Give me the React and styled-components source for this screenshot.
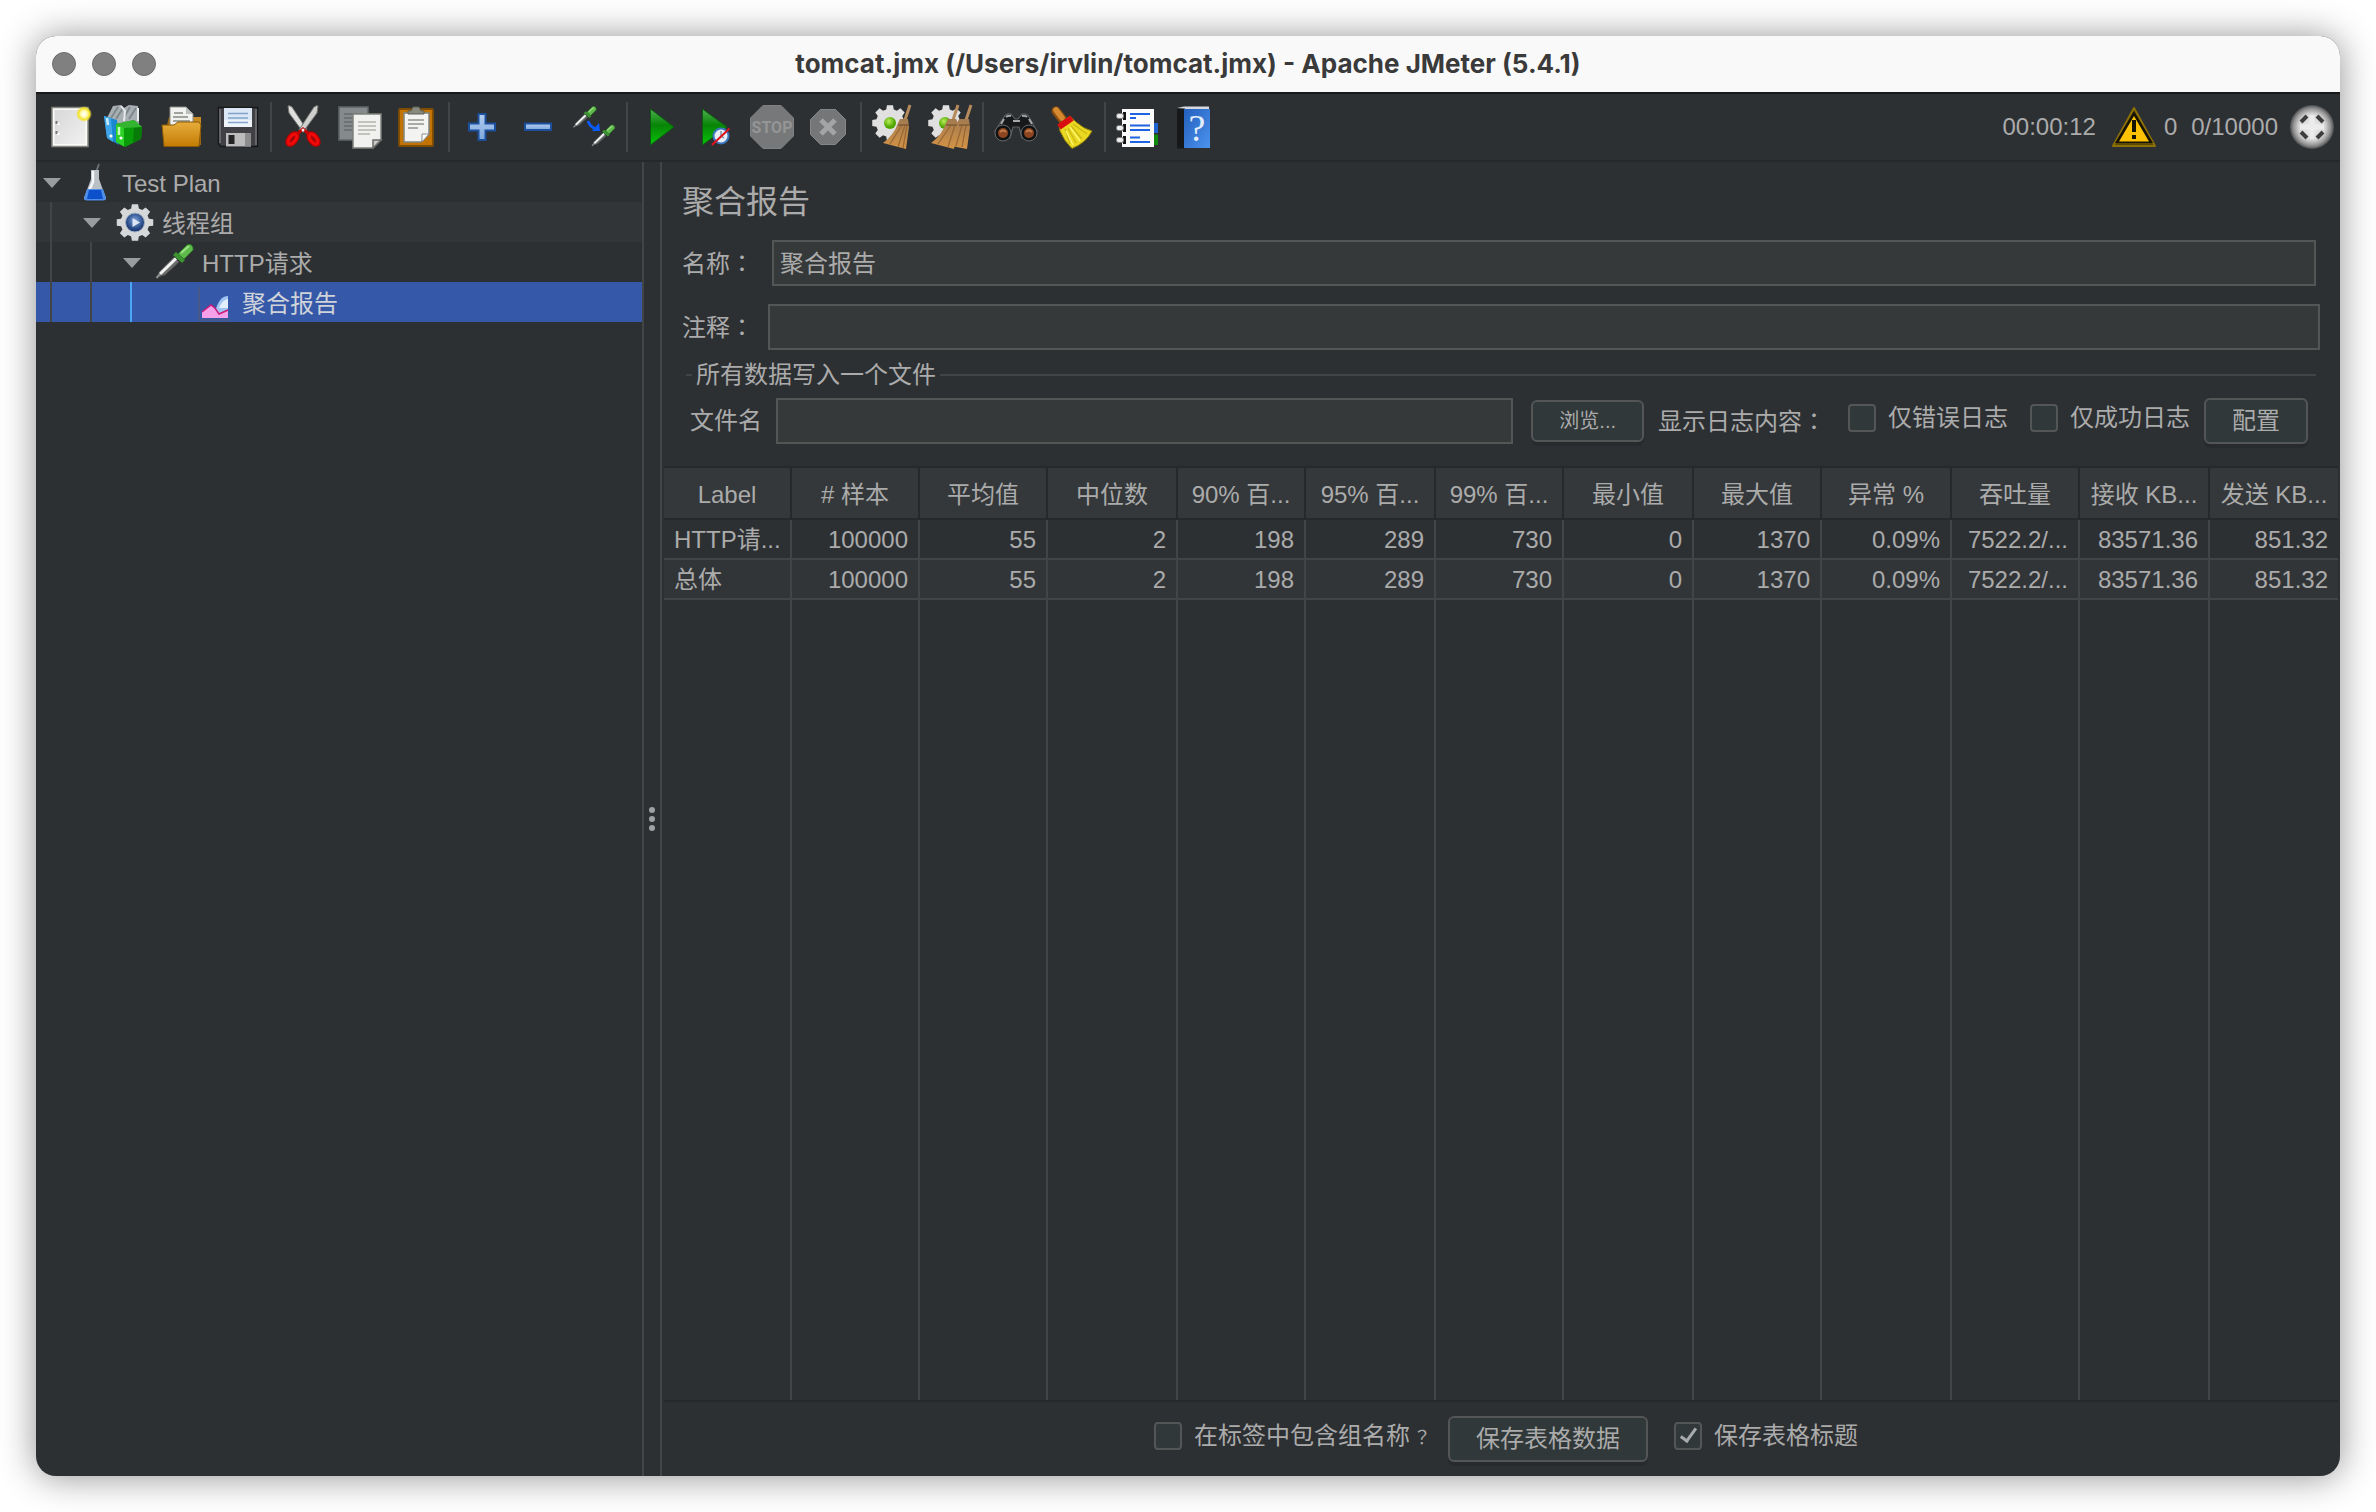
import React, { useState } from "react";
import styled, { createGlobalStyle, css } from "styled-components";

const c = {
  bg: "#2d3033",
  alt: "#323538",
  dark: "#26292b",
  line: "#434445",
  text: "#ababab",
  field: "#363939",
  border: "#545555",
  control: "#303839",
  select: "#3558a8",
};

const Global = createGlobalStyle`
  *, *::before, *::after { box-sizing: border-box; }
  body {
    margin: 0;
    background: #fff;
    color: ${c.text};
    font-family: "Liberation Sans", "Noto Sans CJK SC", sans-serif;
    font-size: 24px;
    line-height: 30px;
  }
  button, input { font: inherit; color: inherit; margin: 0; }
`;

const Desktop = styled.div`
  min-height: 100vh;
  padding: 36px;
  display: flex;
`;

const Window = styled.div`
  flex: 1;
  min-width: 0;
  display: flex;
  flex-direction: column;
  overflow: hidden;
  border-radius: 20px;
  background: ${c.bg};
  box-shadow: 0 1px 36px rgba(0, 0, 0, 0.44);
`;

const TitleBar = styled.header`
  display: grid;
  grid-template-columns: 1fr auto 1fr;
  align-items: center;
  height: 58px;
  padding: 0 16px;
  background: #f9f9f9;
  border-bottom: 2px solid #17191a;
`;

const Lights = styled.div`
  display: flex;
  gap: 16px;
`;

const Light = styled.button`
  width: 24px;
  height: 24px;
  padding: 0;
  border: 1px solid #6c6c6c;
  border-radius: 50%;
  background: #808080;
`;

const Title = styled.h1`
  margin: 0;
  color: #3a3a3a;
  font: 700 26px/30px Inter, "Liberation Sans", sans-serif;
`;

const ToolBar = styled.div`
  display: flex;
  align-items: center;
  height: 68px;
  padding: 0 6px;
  border-bottom: 2px solid ${c.dark};
`;

const ToolButton = styled.button`
  width: 56px;
  height: 56px;
  padding: 6px;
  border: 0;
  background: none;
`;

const Icon = styled.svg`
  display: block;
  flex: none;
  width: ${(p) => p.$size ?? 44}px;
  height: ${(p) => p.$size ?? 44}px;
  overflow: visible;
`;

const Separator = styled.div`
  width: 2px;
  height: 50px;
  margin: 0 4px;
  background: ${c.line};
`;

const Status = styled.div`
  display: flex;
  align-items: center;
  margin-left: auto;
`;

const StatusText = styled.span`
  margin-left: ${(p) => p.$gap || 0}px;
  margin-right: ${(p) => p.$after || 0}px;
`;

const Body = styled.div`
  flex: 1;
  display: flex;
  min-height: 0;
`;

const Tree = styled.nav`
  flex: none;
  width: 606px;
`;

const TreeRow = styled.div`
  display: flex;
  align-items: center;
  height: 40px;
  background: ${(p) => (p.$selected ? c.select : p.$alt ? c.alt : c.bg)};
  color: ${(p) => (p.$selected ? "#cfd3da" : c.text)};
`;

const Guide = styled.span`
  align-self: stretch;
  width: 40px;
  padding-left: 14px;
  &::before {
    content: "";
    display: block;
    width: 2px;
    height: 100%;
    background: ${(p) => (p.$active ? "#4ba6f5" : c.line)};
  }
`;

const Toggle = styled.button`
  display: flex;
  width: 38px;
  height: 40px;
  padding: 2px 0 0 7px;
  align-items: center;
  border: 0;
  background: none;
`;

const Spacer = styled.span`
  width: 38px;
`;

const Arrow = styled.span`
  border: 9px solid transparent;
  border-top: 10px solid #9a9d9f;
  border-bottom: 0;
`;

const NodeName = styled.span`
  margin-left: 8px;
  padding-top: 3px;
`;

const Divider = styled.div`
  flex: none;
  width: 20px;
  display: flex;
  flex-direction: column;
  align-items: center;
  justify-content: center;
  gap: 3px;
  border: solid ${c.line};
  border-width: 0 2px;
`;

const Dot = styled.span`
  width: 6px;
  height: 6px;
  border-radius: 50%;
  background: #9ea2a4;
`;

const Main = styled.main`
  flex: 1;
  min-width: 0;
  display: flex;
  flex-direction: column;
  padding: 0 2px;
`;

const Heading = styled.h2`
  margin: 20px 0 18px 18px;
  font-size: 32px;
  line-height: 40px;
  font-weight: 400;
`;

const Field = styled.div`
  display: flex;
  align-items: center;
  gap: ${(p) => (p.$wide ? 14 : 18)}px;
  margin: 0 ${(p) => (p.$wide ? 18 : 22)}px ${(p) => (p.$wide ? 10 : 18)}px 18px;
`;

/* Full-width colon and question mark sit in the middle of their square. */
const Mark = styled.span`
  display: inline-block;
  width: 24px;
  text-align: center;
  font-family: "Noto Sans CJK TC", sans-serif;
  font-size: ${(p) => (p.$small ? 18 : 24)}px;
`;

const TextBox = styled.input`
  flex: 1;
  min-width: 0;
  height: 46px;
  padding: 0 6px 4px;
  border: 2px solid ${c.border};
  border-radius: 0;
  outline: 0;
  background: ${c.field};
`;

const Group = styled.fieldset`
  min-width: 0;
  margin: 0 22px 22px;
  padding: 8px 8px 0 4px;
  border: 0;
  border-top: 2px solid ${c.line};
`;

const Legend = styled.legend`
  margin-left: 2px;
  padding: 0 4px;
`;

const FileRow = styled.div`
  display: flex;
  align-items: center;
  white-space: nowrap;
`;

const FileLabel = styled.label`
  margin-right: 14px;
`;

const Caption = styled.span`
  margin: 0 22px 0 14px;
`;

const Button = styled.button`
  height: ${(p) => (p.$small ? 42 : 46)}px;
  padding: 0 26px;
  border: 2px solid ${c.border};
  border-radius: 6px;
  background: ${c.control};
  box-shadow: 0 4px 0 #282b2d;
  white-space: nowrap;
  font-size: ${(p) => (p.$small ? 20 : 24)}px;
  margin-left: ${(p) => p.$gap || 0}px;
`;

const Check = styled.label`
  display: flex;
  align-items: center;
  gap: 12px;
  margin-bottom: 6px;
  margin-right: ${(p) => p.$after || 0}px;
`;

const Box = styled.input`
  appearance: none;
  display: grid;
  width: 28px;
  height: 28px;
  border: 2px solid ${c.border};
  border-radius: 4px;
  background: ${c.control};
  ${(p) =>
    p.checked &&
    css`
      &::before {
        content: "";
        width: 9px;
        height: 17px;
        margin: 1px 0 0 8px;
        border: solid #a8abac;
        border-width: 0 3px 3px 0;
        transform: rotate(36deg);
      }
    `}
`;

const TableArea = styled.div`
  flex: 1;
  display: flex;
  border: solid ${c.dark};
  border-width: 2px 0;
`;

const Table = styled.table`
  width: 100%;
  table-layout: fixed;
  border-collapse: separate;
  border-spacing: 0;
`;

const Head = styled.th`
  height: 52px;
  padding: 4px 0 0;
  overflow: hidden;
  white-space: nowrap;
  font-weight: 400;
  background: #34383a;
  border: solid ${c.dark};
  border-width: 0 2px 2px 0;
  &:last-child { border-right-width: 0; }
`;

const Row = styled.tr`
  background: ${(p) => (p.$alt ? c.alt : c.bg)};
`;

const Cell = styled.td`
  height: ${(p) => (p.$filler ? "auto" : "40px")};
  padding: 2px 10px 0;
  overflow: hidden;
  white-space: nowrap;
  text-align: right;
  border: solid ${c.line};
  border-width: 0 2px ${(p) => (p.$filler ? 0 : 2)}px 0;
  &:first-child { text-align: left; }
  &:last-child { border-right-width: 0; }
`;

const Footer = styled.footer`
  display: flex;
  align-items: center;
  justify-content: center;
  height: 74px;
  padding-left: 10px;
`;

const SaveButton = styled(Button)`
  margin-right: 26px;
`;

const gearPath = (cx, cy, r) => {
  const pts = [];
  for (let i = 0; i < 8; i++) {
    const a = (i * Math.PI) / 4;
    [[-0.27, 0.78], [-0.17, 1], [0.17, 1], [0.27, 0.78]].forEach(([d, k]) => {
      pts.push(`${cx + Math.sin(a + d) * r * k},${cy - Math.cos(a + d) * r * k}`);
    });
  }
  return pts.join(" ");
};

const Gradients = () => (
  <Icon $size={0} aria-hidden="true">
    <defs>
      <linearGradient id="paper" x1="0" y1="0" x2="1" y2="1">
        <stop offset="0" stopColor="#d8d8d8" /><stop offset="1" stopColor="#f0f0f0" />
      </linearGradient>
      <linearGradient id="folder" x1="0" y1="0" x2="0" y2="1">
        <stop offset="0" stopColor="#e8ad3c" /><stop offset="1" stopColor="#c27c04" />
      </linearGradient>
      <linearGradient id="green" x1="0" y1="0" x2="0" y2="1">
        <stop offset="0" stopColor="#4fb04f" /><stop offset="0.45" stopColor="#078407" /><stop offset="1" stopColor="#09c409" />
      </linearGradient>
      <linearGradient id="sky" x1="0" y1="0" x2="0" y2="1">
        <stop offset="0" stopColor="#b4cdf0" /><stop offset="1" stopColor="#7da7de" />
      </linearGradient>
      <linearGradient id="straw" x1="0" y1="0" x2="0" y2="1">
        <stop offset="0" stopColor="#a37b50" /><stop offset="1" stopColor="#d49345" />
      </linearGradient>
      <linearGradient id="book" x1="0" y1="0" x2="1" y2="1">
        <stop offset="0" stopColor="#2460bd" /><stop offset="1" stopColor="#4b93ee" />
      </linearGradient>
      <radialGradient id="ball">
        <stop offset="0" stopColor="#ededed" /><stop offset="0.6" stopColor="#d6d6d6" /><stop offset="0.85" stopColor="#8f8f8f" /><stop offset="1" stopColor="#4a4c4e" />
      </radialGradient>
      <radialGradient id="glow">
        <stop offset="0" stopColor="#fff" /><stop offset="0.35" stopColor="#fffbc0" /><stop offset="0.7" stopColor="#f3e22a" /><stop offset="1" stopColor="#f3e22a" stopOpacity="0" />
      </radialGradient>
      <radialGradient id="lime" cx="0.4" cy="0.35">
        <stop offset="0" stopColor="#b8ee5a" /><stop offset="1" stopColor="#4fa500" />
      </radialGradient>
      <radialGradient id="lens" cx="0.5" cy="0.4">
        <stop offset="0" stopColor="#7ba3dc" /><stop offset="1" stopColor="#1d3c78" />
      </radialGradient>
    </defs>
  </Icon>
);

const Pipette = ({ x, y, k = 1 }) => (
  <g transform={`translate(${x} ${y}) scale(${k})`}>
    <path d="M3 35 L6 29 L20 15 L25 20 L11 33 Z" fill="#6c6e6e" stroke="#4d4f4f" strokeWidth="1" />
    <path d="M6 32 L22 16.500" stroke="#f2f2f2" strokeWidth="3" />
    <path d="M2.500 36 L6 32" stroke="#8c8c8c" strokeWidth="2" />
    <path d="M22 10 L31 18 L28 21 L19 13 Z" fill="#3a9430" />
    <path d="M24 12 L33 3 Q38 1 39 6 L39 8 L30 17 Z" fill="#5fba4c" stroke="#2f7f29" strokeWidth="1" />
    <path d="M27 11 L35 4" stroke="#9be083" strokeWidth="2" />
  </g>
);

const icons = {
  新建: (
    <>
      <rect x="4" y="2.500" width="36" height="39" fill="#fafaf8" stroke="#85877f" strokeWidth="1.500" />
      <rect x="6.500" y="5" width="31" height="34" fill="url(#paper)" />
      <path d="M8.500 16 v3 M8.500 26 v3" stroke="#777" strokeWidth="2" />
      <path d="M10.500 18 v2 M10.500 28 v2" stroke="#fff" strokeWidth="2" />
      <circle cx="36" cy="9" r="8" fill="url(#glow)" />
    </>
  ),
  模板: (
    <>
      <path d="M3 13 L9 1 L17 0 L20 3 L25 0 L34 1 L35 19 L20 25 L6 20 Z" fill="#a9b0b4" />
      <path d="M7 13 L14 2 M12 14 L19 3 M20 12 L26 2 M25 14 L32 3" stroke="#7f888c" strokeWidth="2" />
      <path d="M17 1 L21 6 L20 16 M34 3 L34 16" stroke="#e8ebed" strokeWidth="2" fill="none" />
      <path d="M0 11 L13 15 L15 40 L3 33 Z" fill="#1b87d0" />
      <path d="M0 11 L7 13 L9 37 L3 33 Z" fill="#3ea5e8" />
      <path d="M3 13 L4 20" stroke="#c8ecff" strokeWidth="2.500" />
      <circle cx="7" cy="31" r="1.600" fill="#fff" />
      <path d="M12 19 L30 15 L38 22 L37 34 L21 42 L12 37 Z" fill="#0a9b0a" />
      <path d="M12 19 L20 22 L20 41.500 L12 37 Z" fill="#2cd126" />
      <path d="M12 19 L30 15 L38 22 L20 23 Z" fill="#35b431" />
      <path d="M30 23 L38 22 L37 34 L29 38 Z" fill="#077a07" />
      <path d="M15 22 v8" stroke="#c6ffbd" strokeWidth="2.500" />
      <circle cx="17" cy="33" r="1.600" fill="#fff" />
    </>
  ),
  打开: (
    <>
      <path d="M9 12 H41 V40 H6 V24 Z" fill="#9b6508" />
      <path d="M33 12 H41 V24 H33 Z" fill="#c78a20" />
      <path d="M10 2 H26 L33 9 V24 H10 Z" fill="#f1f1ef" stroke="#8c8c86" />
      <path d="M26 2 L33 9 H26 Z" fill="#bcc0bd" />
      <path d="M14 8 H23 M13 12 H28 M13 16 H30" stroke="#a0a29e" strokeWidth="1.800" />
      <path d="M2 20 H14 L18 17 H39 L41 20 L39 41.500 H4 Z" fill="url(#folder)" stroke="#8a5904" strokeWidth="1" />
    </>
  ),
  保存: (
    <>
      <path d="M2.500 2.500 H41.500 V41.500 H5 L2.500 39 Z" fill="#414145" stroke="#17181a" strokeWidth="1.500" />
      <path d="M4 4 V38 M40 4 V40" stroke="#747478" strokeWidth="1.500" />
      <rect x="8" y="3" width="28" height="19" fill="#dbe7f5" />
      <rect x="8" y="15" width="28" height="7" fill="#eff4fa" />
      <path d="M12 8.500 H32 M12 13 H32 M12 17.500 H32" stroke="#83a5c9" strokeWidth="1.600" />
      <rect x="10" y="28" width="25" height="13.500" fill="#bcbcbc" />
      <rect x="29" y="28" width="6" height="13.500" fill="#8d8d8d" />
      <rect x="12.500" y="30" width="6" height="9" fill="#242424" />
    </>
  ),
  剪切: (
    <>
      <path d="M6 1 Q7 0 10 2 L25 25 L21 27 L7 8 Z" fill="#dfdfdd" stroke="#757773" />
      <path d="M36 1 Q35 0 32 2 L17 25 L21 27 L35 8 Z" fill="#cfcfcd" stroke="#757773" />
      <ellipse cx="10.500" cy="34" rx="3" ry="6" transform="rotate(38 10.500 34)" fill="none" stroke="#b80000" strokeWidth="5.500" />
      <ellipse cx="10.500" cy="34" rx="3" ry="6" transform="rotate(38 10.500 34)" fill="none" stroke="#f00a0a" strokeWidth="3" />
      <ellipse cx="31.500" cy="34" rx="3" ry="6" transform="rotate(-38 31.500 34)" fill="none" stroke="#b80000" strokeWidth="5.500" />
      <ellipse cx="31.500" cy="34" rx="3" ry="6" transform="rotate(-38 31.500 34)" fill="none" stroke="#f00a0a" strokeWidth="3" />
      <path d="M15 29 L21 24 L27 29" stroke="#c40000" strokeWidth="3" fill="none" />
      <circle cx="21" cy="25" r="1.500" fill="#eee" />
    </>
  ),
  复制: (
    <>
      <rect x="1" y="2" width="29" height="33" fill="#858a8c" stroke="#606566" strokeWidth="1.500" />
      <path d="M6 9 H24 M6 13 H24 M6 17 H24 M6 21 H24 M6 25 H24" stroke="#666b6d" strokeWidth="1.500" />
      <path d="M15 9 H43 V35 L35 43 H15 Z" fill="#f1f1ef" stroke="#7d807b" strokeWidth="1.500" />
      <path d="M20 17 H38 M20 21 H38 M20 25 H38 M20 29 H32" stroke="#b1b1ae" strokeWidth="1.500" />
      <path d="M43 35 H35 V43 Z" fill="#c9ccc8" stroke="#686b67" strokeWidth="1.500" />
    </>
  ),
  粘贴: (
    <>
      <rect x="5" y="4" width="34" height="37" rx="1" fill="#c17404" stroke="#7e4c04" strokeWidth="1.800" />
      <path d="M10 8 H35 V29 L27 37 H10 Z" fill="#f3f3f1" stroke="#82857f" strokeWidth="1.500" />
      <path d="M14 15 H30 M14 19 H30 M14 23 H24" stroke="#92928e" strokeWidth="1.500" />
      <path d="M35 29 H28 V37 Z" fill="#fff" stroke="#8a8c88" />
      <path d="M14 9 V6 H17 L19 2 H25 L27 6 H30 V9 Z" fill="#878a7f" stroke="#5c5e54" />
    </>
  ),
  展开: <path d="M18.500 9 H25.500 V18.500 H35 V25.500 H25.500 V35 H18.500 V25.500 H9 V18.500 H18.500 Z" fill="url(#sky)" stroke="#1c4f9c" strokeWidth="2" />,
  折叠: <rect x="9" y="18.500" width="26" height="6.500" fill="url(#sky)" stroke="#1c4f9c" strokeWidth="2" />,
  切换: (
    <>
      <Pipette x={0} y={0} k={0.62} />
      <Pipette x={18.5} y={18.5} k={0.62} />
      <path d="M16 16 Q18 22 24 24" stroke="#0a5cff" strokeWidth="2.500" fill="none" />
      <path d="M20 26 L28 26 L27 18 Z" fill="#0a5cff" />
    </>
  ),
  启动: <path d="M12.500 4 L36 22 L12.500 40 Z" fill="url(#green)" stroke="#0a5c10" />,
  不停顿启动: (
    <>
      <path d="M8.500 4 L33 22 L8.500 40 Z" fill="url(#green)" stroke="#0a5c10" />
      <circle cx="27" cy="31" r="7.500" fill="#e6eef8" stroke="#3b76be" strokeWidth="2" />
      <path d="M27 26 V31 L30 33" stroke="#8193a8" strokeWidth="1.500" fill="none" />
      <path d="M18 40 L35.500 23.500" stroke="#e0101c" strokeWidth="2" />
    </>
  ),
  停止: (
    <>
      <path d="M13 0.500 H31 L43.500 13 V31 L31 43.500 H13 L0.500 31 V13 Z" fill="#777879" stroke="#808182" />
      <text x="22" y="27.500" textAnchor="middle" fontFamily="Roboto, sans-serif" fontWeight="700" fontSize="16" fill="#949596">STOP</text>
    </>
  ),
  关闭: (
    <>
      <path d="M14.500 4.500 H29.500 L39.500 14.500 V29.500 L29.500 39.500 H14.500 L4.500 29.500 V14.500 Z" fill="#757677" stroke="#858687" />
      <path d="M15 15 L29 29 M29 15 L15 29" stroke="#a3a4a5" strokeWidth="5" />
    </>
  ),
  清除: (
    <>
      <polygon points={gearPath(18, 18, 18)} fill="#e0e0e0" />
      <circle cx="18" cy="18" r="6" fill="url(#lime)" />
      <path d="M38 0 L33 15" stroke="#b58a5c" strokeWidth="3" />
      <path d="M28 14 H36 L37 22 L34 44 L11 38 Q22 30 26 18 Z" fill="url(#straw)" />
      <path d="M30 20 L18 39 M33 20 L26 42 M35 20 L31 43" stroke="#9a6833" strokeWidth="1.300" />
      <path d="M26 20 H37" stroke="#7d5a36" strokeWidth="1.500" />
    </>
  ),
  全部清除: (
    <>
      <polygon points={gearPath(18, 18, 18)} fill="#e0e0e0" />
      <circle cx="17" cy="18" r="6" fill="url(#lime)" />
      <path d="M30 0 L25 15 M43 0 L38 15" stroke="#b58a5c" strokeWidth="3" />
      <path d="M20 14 H28 L31 20 L26 44 L3 38 Q14 30 18 18 Z" fill="url(#straw)" />
      <path d="M31 14 H41 L42 22 L39 44 L18 40 Q27 30 29 18 Z" fill="url(#straw)" />
      <path d="M23 20 L10 39 M27 20 L20 42 M34 20 L28 41 M38 20 L34 42" stroke="#9a6833" strokeWidth="1.300" />
      <path d="M18 20 H29 M31 20 H42" stroke="#7d5a36" strokeWidth="1.500" />
    </>
  ),
  查找: (
    <>
      <path d="M10 12 Q12 8 17 9 L21 14 H24 L28 9 Q33 8 35 12 L43 26 L40 33 H28 L25 22 H19 L16 33 H4 L1 26 Z" fill="#17181a" stroke="#5d5f61" strokeWidth="1.200" />
      <path d="M12 12 Q14 10 17 11 M28 11 Q31 10 33 12 M7 19 L10 14 M38 19 L35 14 M19 16 H26" stroke="#a5a7a8" strokeWidth="2" fill="none" />
      <circle cx="9" cy="28" r="8" fill="#111213" stroke="#66686a" />
      <circle cx="35" cy="28" r="8" fill="#111213" stroke="#66686a" />
      <circle cx="9" cy="28" r="5" fill="#8c451f" />
      <circle cx="35" cy="28" r="5" fill="#8c451f" />
      <path d="M6 27 Q9 24 12 27 M32 27 Q35 24 38 27" stroke="#c47d50" strokeWidth="1.800" fill="none" />
    </>
  ),
  清除搜索: (
    <>
      <path d="M6 6 L13 15" stroke="#8a4f10" strokeWidth="9" strokeLinecap="round" />
      <path d="M6 5 L12 13" stroke="#d58a30" strokeWidth="5.500" strokeLinecap="round" />
      <path d="M9 20 L20 11 L26 17 Q34 24 42 26 Q36 38 22 43.500 Q14 36 10 26 Z" fill="#ead920" stroke="#8f8208" />
      <path d="M15 24 L20 39 M18 23 L26 38 M21 21 L32 34 M23 19 L37 29" stroke="#cdbb14" strokeWidth="1.500" />
      <path d="M16 26 L23 40 M20 22 L30 36" stroke="#fff46a" strokeWidth="1.500" />
      <path d="M9 22 L22 13" stroke="#d80e12" strokeWidth="6" />
    </>
  ),
  函数助手: (
    <>
      <rect x="36" y="18" width="6" height="10" fill="#1f62d0" />
      <rect x="36" y="29.500" width="6" height="10.500" fill="#0e8a0e" />
      <rect x="6" y="4" width="32" height="38" fill="#fbfbfb" />
      <path d="M14 9 H34 M14 13 H20 M14 20.500 H34 M14 25 H34 M14 32.500 H24 M14 37 H34" stroke="#1e63e0" strokeWidth="2.200" />
      {[11, 23, 35].map((y) => (
        <g key={y}>
          <rect x="7" y={y - 4} width="3" height="8" fill="#151515" />
          <rect x="0.500" y={y - 2.5} width="7" height="5" rx="2" fill="#ededed" stroke="#777" />
        </g>
      ))}
    </>
  ),
  帮助: (
    <>
      <path d="M5 3 L12 1.500 H37 V4 H12 Z" fill="#d6dae0" />
      <rect x="5" y="3.500" width="8" height="40" fill="#17181a" />
      <rect x="12" y="4" width="26" height="39" fill="url(#book)" />
      <text x="25" y="36" textAnchor="middle" fontFamily="Liberation Serif, serif" fontSize="38" fill="#e3edfa">?</text>
    </>
  ),
};

const toolGroups = [
  ["新建", "模板", "打开", "保存"],
  ["剪切", "复制", "粘贴"],
  ["展开", "折叠", "切换"],
  ["启动", "不停顿启动", "停止", "关闭"],
  ["清除", "全部清除"],
  ["查找", "清除搜索"],
  ["函数助手", "帮助"],
];

const nodeIcons = {
  plan: (
    <>
      <path d="M25 2 L22 10" stroke="#707376" strokeWidth="1.800" />
      <path d="M17 8 H25 V17 L32 36 Q32 38 30 38 H12 Q10 38 10 36 L17 17 Z" fill="#b9c0c6" />
      <path d="M19 9 V20 L14 31" stroke="#f4f6f8" strokeWidth="2.500" fill="none" />
      <path d="M13 27 H29 L32 36 Q32 38.500 29 38.500 H13 Q10 38.500 10 36 Z" fill="#4f8ee8" />
      <path d="M15 28 H27 L29 37 H13 Z" fill="#0c50cc" />
    </>
  ),
  group: (
    <>
      <polygon points={gearPath(21, 20.5, 18.5)} fill="#d6d7d8" />
      <circle cx="21" cy="20.500" r="9.500" fill="url(#lens)" stroke="#a6b3c6" />
      <path d="M18.500 16 L26 20.500 L18.500 25 Z" fill="#dde6f2" />
    </>
  ),
  http: <Pipette x={0} y={0} />,
  report: (
    <>
      <path d="M5 5 V38 H36" stroke="#4c5a80" strokeWidth="1.500" fill="none" />
      <path d="M21 30 Q25 14 34 14 V32 H21 Z" fill="#9fc4f2" />
      <path d="M25 26 Q28 18 34 17 V26 Z" fill="#e4effc" />
      <path d="M8 36 V30 L17 23 L25 31 L34 28 V36 Z" fill="#f7a0ea" />
      <path d="M8 30 L17 23 L21 26 L25 32 L34 28" stroke="#c81c78" strokeWidth="1.500" fill="none" />
    </>
  ),
};

const nodes = [
  { name: "Test Plan", icon: "plan", level: 0 },
  { name: "线程组", icon: "group", level: 1 },
  { name: "HTTP请求", icon: "http", level: 2 },
  { name: "聚合报告", icon: "report", level: 3, leaf: true },
];

const columns = [
  ["Label", 128], ["# 样本", 128], ["平均值", 128], ["中位数", 130], ["90% 百...", 128],
  ["95% 百...", 130], ["99% 百...", 128], ["最小值", 130], ["最大值", 128], ["异常 %", 130],
  ["吞吐量", 128], ["接收 KB...", 130], ["发送 KB...", 128],
];

const values = ["100000", "55", "2", "198", "289", "730", "0", "1370", "0.09%", "7522.2/...", "83571.36", "851.32"];
const rows = [["HTTP请...", ...values], ["总体", ...values]];

function CheckBox({ label, mark, initial = false, after }) {
  const [on, setOn] = useState(initial);
  return (
    <Check $after={after}>
      <Box type="checkbox" checked={on} onChange={() => setOn(!on)} />
      <span>{label}{mark && <Mark $small>{mark}</Mark>}</span>
    </Check>
  );
}

export default function App() {
  return (
    <Desktop>
      <Global />
      <Gradients />
      <Window>
        <TitleBar>
          <Lights>
            <Light aria-label="关闭窗口" />
            <Light aria-label="最小化" />
            <Light aria-label="缩放" />
          </Lights>
          <Title>tomcat.jmx (/Users/irvlin/tomcat.jmx) - Apache JMeter (5.4.1)</Title>
        </TitleBar>

        <ToolBar role="toolbar">
          {toolGroups.map((group, i) => (
            <React.Fragment key={i}>
              {i > 0 && <Separator />}
              {group.map((name) => (
                <ToolButton key={name} aria-label={name}>
                  <Icon viewBox="0 0 44 44">{icons[name]}</Icon>
                </ToolButton>
              ))}
            </React.Fragment>
          ))}
          <Status>
            <StatusText $after={16}>00:00:12</StatusText>
            <Icon viewBox="0 0 44 44">
              <path d="M22 3 L43 41 H1 Z" fill="#5d4b05" stroke="#8c7006" strokeWidth="2" strokeLinejoin="round" />
              <path d="M22 6 L41 38 H3 Z" fill="#171303" />
              <path d="M22 11 L37 36.500 H7 Z" fill="#fcc203" />
              <path d="M20 15 H24 V27 H20 Z M20 30 H24 V34 H20 Z" fill="#171303" />
            </Icon>
            <StatusText $gap={8}>0</StatusText>
            <StatusText $gap={14} $after={12}>0/10000</StatusText>
            <Icon viewBox="0 0 44 44">
              <circle cx="22" cy="22" r="22" fill="url(#ball)" />
              <path d="M11 17 L17 11 M27 11 L33 17 M11 27 L17 33 M27 33 L33 27" stroke="#3c3e3f" strokeWidth="4" />
              <path d="M22 10 V34 M10 22 H34" stroke="#ececec" strokeWidth="5" />
            </Icon>
          </Status>
        </ToolBar>

        <Body>
          <Tree>
            {nodes.map((n, i) => (
              <TreeRow key={n.name} $alt={i % 2 === 1} $selected={n.leaf}>
                {Array.from({ length: n.level }, (_, g) => (
                  <Guide key={g} $active={n.leaf && g === n.level - 1} />
                ))}
                {n.leaf ? <Spacer /> : <Toggle aria-label={n.name}><Arrow /></Toggle>}
                <Icon $size={40} viewBox="0 0 40 40">{nodeIcons[n.icon]}</Icon>
                <NodeName>{n.name}</NodeName>
              </TreeRow>
            ))}
          </Tree>
          <Divider><Dot /><Dot /><Dot /></Divider>

          <Main>
            <Heading>聚合报告</Heading>
            <Field>
              <label htmlFor="name">名称<Mark>：</Mark></label>
              <TextBox id="name" defaultValue="聚合报告" />
            </Field>
            <Field $wide>
              <label htmlFor="comment">注释<Mark>：</Mark></label>
              <TextBox id="comment" />
            </Field>
            <Group>
              <Legend>所有数据写入一个文件</Legend>
              <FileRow>
                <FileLabel htmlFor="file">文件名</FileLabel>
                <TextBox id="file" />
                <Button $small $gap={18}>浏览...</Button>
                <Caption>显示日志内容<Mark>：</Mark></Caption>
                <CheckBox label="仅错误日志" after={22} />
                <CheckBox label="仅成功日志" after={14} />
                <Button>配置</Button>
              </FileRow>
            </Group>

            <TableArea>
              <Table>
                <colgroup>
                  {columns.map(([name, w]) => <col key={name} width={w} />)}
                </colgroup>
                <thead>
                  <tr>{columns.map(([name]) => <Head key={name}>{name}</Head>)}</tr>
                </thead>
                <tbody>
                  {rows.map((row, i) => (
                    <Row key={row[0]} $alt={i % 2 === 1}>
                      {row.map((v, j) => <Cell key={j}>{v}</Cell>)}
                    </Row>
                  ))}
                  <Row>{columns.map(([name]) => <Cell key={name} $filler />)}</Row>
                </tbody>
              </Table>
            </TableArea>

            <Footer>
              <CheckBox label="在标签中包含组名称" mark="？" after={14} />
              <SaveButton>保存表格数据</SaveButton>
              <CheckBox label="保存表格标题" initial />
            </Footer>
          </Main>
        </Body>
      </Window>
    </Desktop>
  );
}
